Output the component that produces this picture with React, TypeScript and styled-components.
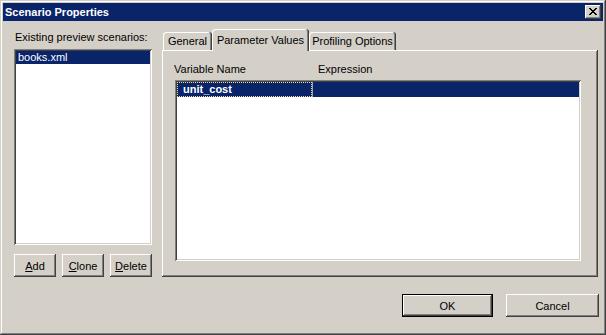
import React from "react";
import styled, { createGlobalStyle, css } from "styled-components";

const GlobalStyle = createGlobalStyle`
  html, body {
    margin: 0;
    padding: 0;
    background: #d4d0c8;
  }
  body {
    font-family: "Liberation Sans", Arial, sans-serif;
    font-size: 11px;
  }
`;

const raised = css`
  box-shadow: inset -1px -1px #404040, inset 1px 1px #ffffff,
    inset -2px -2px #808080, inset 2px 2px #d4d0c8;
`;

const sunken = css`
  box-shadow: inset 1px 1px #808080, inset -1px -1px #ffffff,
    inset 2px 2px #404040, inset -2px -2px #d4d0c8;
`;

const Window = styled.div`
  width: 606px;
  height: 335px;
  box-sizing: border-box;
  padding: 3px;
  display: flex;
  flex-direction: column;
  background: #d4d0c8;
  color: #000;
  font: 11px "Liberation Sans", Arial, sans-serif;
  box-shadow: inset -1px -1px #404040, inset 1px 1px #d4d0c8,
    inset -2px -2px #808080, inset 2px 2px #ffffff;
`;

const TitleBar = styled.div`
  height: 18px;
  display: flex;
  align-items: center;
  justify-content: space-between;
  padding: 0 2px 0 2px;
  background: #0a246a;
`;

const Title = styled.span`
  color: #fff;
  font-weight: bold;
  font-size: 11px;
  line-height: 13px;
`;

const CloseButton = styled.button`
  width: 16px;
  height: 14px;
  padding: 0 0 1px 0;
  border: none;
  background: #d4d0c8;
  display: flex;
  align-items: center;
  justify-content: center;
  ${raised}
`;

const Body = styled.div`
  flex: 1;
  display: flex;
  flex-direction: column;
  padding: 8px 0 0 11px;
`;

const MainRow = styled.div`
  display: flex;
  gap: 10px;
  height: 248px;
  padding-right: 5px;
`;

const LeftColumn = styled.div`
  width: 138px;
  display: flex;
  flex-direction: column;
`;

const Label = styled.div`
  margin-top: 2px;
  padding-left: 1px;
  line-height: 13px;
  white-space: nowrap;
`;

const ListBox = styled.div`
  margin-top: 5px;
  height: 196px;
  box-sizing: border-box;
  padding: 2px;
  background: #fff;
  ${sunken}
`;

const ListItem = styled.div<{ $selected?: boolean }>`
  height: 13px;
  line-height: 13px;
  padding-left: 2px;
  background: ${(p) => (p.$selected ? "#0a246a" : "transparent")};
  color: ${(p) => (p.$selected ? "#fff" : "#000")};
`;

const ButtonRow = styled.div`
  margin-top: 9px;
  display: flex;
  gap: 6px;
`;

const Button = styled.button<{ $w: number; $default?: boolean }>`
  width: ${(p) => p.$w}px;
  height: 23px;
  padding: 0;
  border: none;
  background: #d4d0c8;
  color: #000;
  font: 11px "Liberation Sans", Arial, sans-serif;
  ${(p) =>
    p.$default
      ? css`
          box-shadow: inset 0 0 0 1px #000, inset -2px -2px #404040,
            inset 2px 2px #ffffff, inset -3px -3px #808080,
            inset 3px 3px #d4d0c8;
        `
      : raised}
`;

const TabControl = styled.div`
  flex: 1;
  display: flex;
  flex-direction: column;
`;

const TabStrip = styled.div`
  height: 21px;
  display: flex;
  align-items: flex-end;
  padding-left: 1px;
`;

const Tab = styled.div<{ $w: number; $active?: boolean }>`
  width: ${(p) => p.$w}px;
  height: ${(p) => (p.$active ? 22 : 18)}px;
  margin-bottom: ${(p) => (p.$active ? -1 : 0)}px;
  box-sizing: border-box;
  padding-top: ${(p) => (p.$active ? 5 : 3)}px;
  line-height: 13px;
  text-align: center;
  white-space: nowrap;
  background: #d4d0c8;
  border-radius: 3px 3px 0 0;
  position: relative;
  z-index: ${(p) => (p.$active ? 1 : 0)};
  box-shadow: inset -1px 0 #404040, inset 1px 1px #ffffff,
    inset -2px 0 #808080;
`;

const TabPanel = styled.div`
  flex: 1;
  display: flex;
  flex-direction: column;
  padding: 13px 17px 16px 12px;
  box-shadow: inset -1px -1px #404040, inset 1px 1px #ffffff,
    inset -2px -2px #808080;
`;

const Header = styled.div`
  display: flex;
  line-height: 13px;
  margin-bottom: 4px;
`;

const HeaderCell = styled.div<{ $w?: number }>`
  width: ${(p) => (p.$w ? `${p.$w}px` : "auto")};
  flex: ${(p) => (p.$w ? "none" : 1)};
`;

const ListView = styled.div`
  flex: 1;
  margin-left: 1px;
  padding: 2px;
  background: #fff;
  ${sunken}
`;

const Row = styled.div<{ $selected?: boolean }>`
  height: 15px;
  display: flex;
  background: ${(p) => (p.$selected ? "#0a246a" : "transparent")};
  color: ${(p) => (p.$selected ? "#fff" : "#000")};
  font-weight: bold;
`;

const Cell = styled.div<{ $w?: number; $focus?: boolean }>`
  width: ${(p) => (p.$w ? `${p.$w}px` : "auto")};
  flex: ${(p) => (p.$w ? "none" : 1)};
  box-sizing: border-box;
  border: 1px ${(p) => (p.$focus ? "dotted #f5db95" : "solid transparent")};
  padding-left: 5px;
  line-height: 13px;
`;

const ColumnDivider = styled.div`
  width: 1px;
  background: #9aa2bc;
`;

const Footer = styled.div`
  margin-top: 17px;
  display: flex;
  justify-content: flex-end;
  gap: 13px;
  padding-right: 4px;
`;

const X_PIXELS = [
  "XX....XX",
  ".XX..XX.",
  "..XXXX..",
  "...XX...",
  "..XXXX..",
  ".XX..XX.",
  "XX....XX",
];

const CloseGlyph = () => (
  <svg width="8" height="7" viewBox="0 0 8 7" shapeRendering="crispEdges">
    {X_PIXELS.flatMap((line, y) =>
      line
        .split("")
        .map((c, x) =>
          c === "X" ? <rect key={`${x}-${y}`} x={x} y={y} width="1" height="1" fill="#000" /> : null
        )
    )}
  </svg>
);

const App = () => {
  return (
    <>
      <GlobalStyle />
      <Window>
        <TitleBar>
          <Title>Scenario Properties</Title>
          <CloseButton type="button" aria-label="Close">
            <CloseGlyph />
          </CloseButton>
        </TitleBar>
        <Body>
          <MainRow>
            <LeftColumn>
              <Label>Existing preview scenarios:</Label>
              <ListBox>
                <ListItem $selected>books.xml</ListItem>
              </ListBox>
              <ButtonRow>
                <Button $w={42}>
                  <u>A</u>dd
                </Button>
                <Button $w={42}>
                  <u>C</u>lone
                </Button>
                <Button $w={42}>
                  <u>D</u>elete
                </Button>
              </ButtonRow>
            </LeftColumn>
            <TabControl>
              <TabStrip>
                <Tab $w={49}>General</Tab>
                <Tab $w={97} $active>
                  Parameter Values
                </Tab>
                <Tab $w={87}>Profiling Options</Tab>
              </TabStrip>
              <TabPanel>
                <Header>
                  <HeaderCell $w={144}>Variable Name</HeaderCell>
                  <HeaderCell>Expression</HeaderCell>
                </Header>
                <ListView>
                  <Row $selected>
                    <Cell $w={135} $focus>
                      unit_cost
                    </Cell>
                    <ColumnDivider />
                    <Cell />
                  </Row>
                </ListView>
              </TabPanel>
            </TabControl>
          </MainRow>
          <Footer>
            <Button $w={91} $default>
              OK
            </Button>
            <Button $w={93}>Cancel</Button>
          </Footer>
        </Body>
      </Window>
    </>
  );
};

export default App;
